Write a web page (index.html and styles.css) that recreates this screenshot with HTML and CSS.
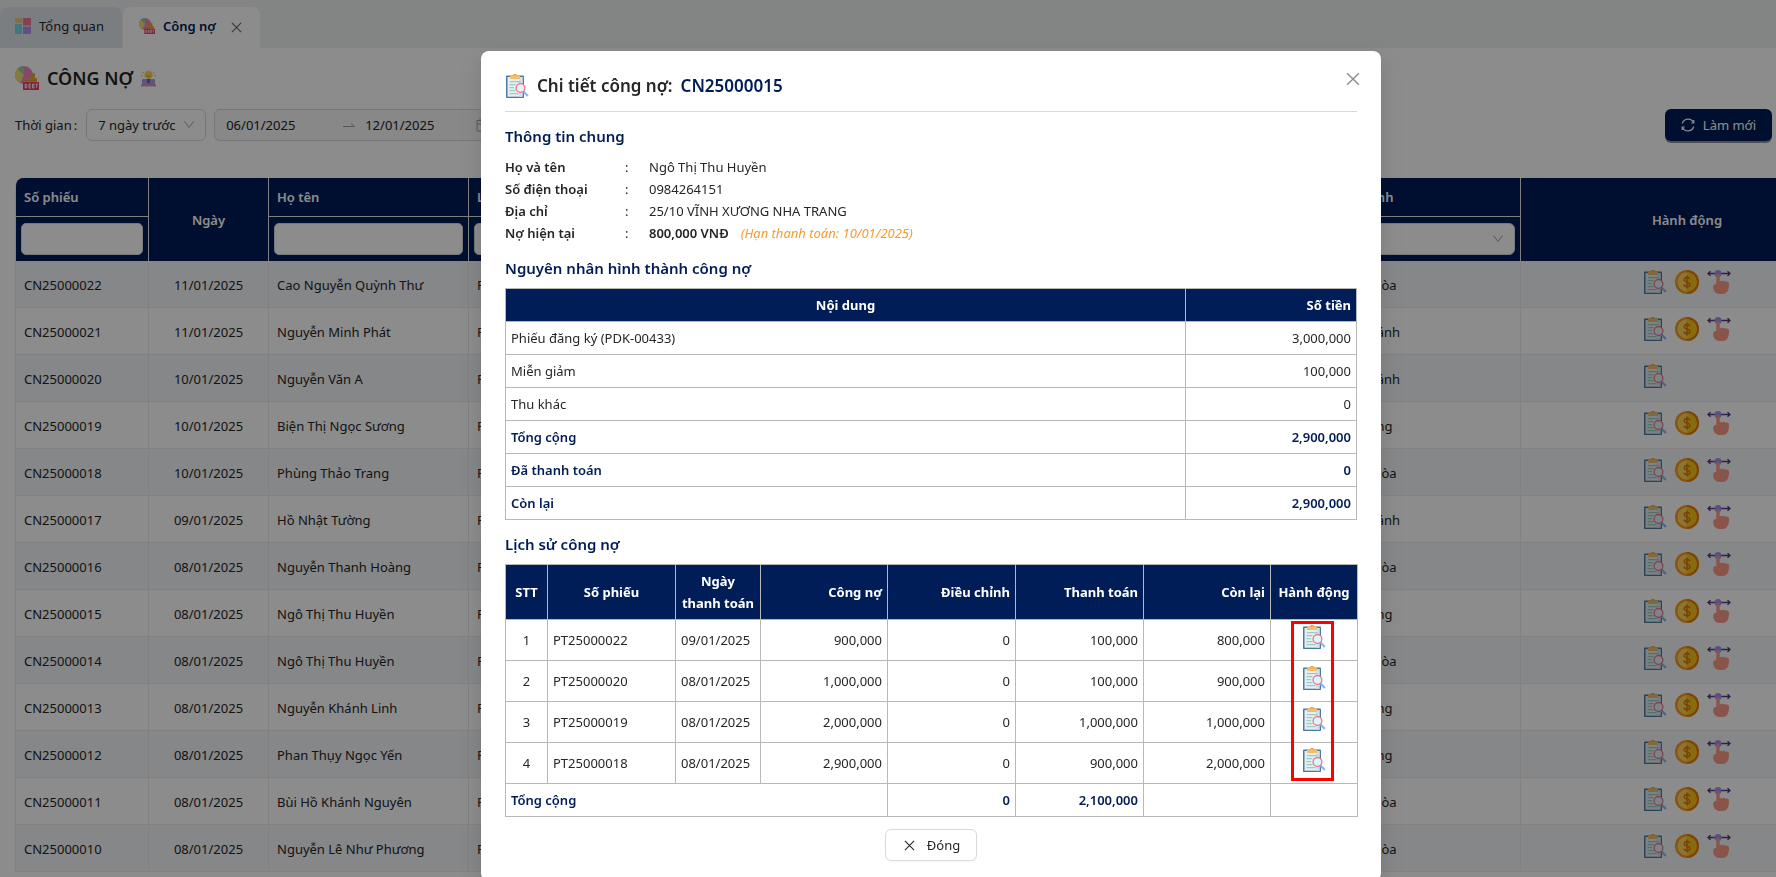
FILE: index.html
```html
<!DOCTYPE html>
<html lang="vi">
<head>
<meta charset="utf-8">
<title>Công nợ</title>
<link rel="stylesheet" href="styles.css">
</head>
<body>
<svg class="sprite" aria-hidden="true">
  <symbol id="i-detail" viewBox="0 0 24 24">
    <rect x="1" y="1.500" width="18" height="22.500" rx=".8" fill="#4d7a9e"/>
    <path d="M2.500 3h15v19.700h-15z" fill="#e6edf5"/>
    <path d="M14 3h3.500v19.700H14z" fill="#d3e0ec"/>
    <path d="M5 1.500h2.500Q8 0 10 0t2.500 1.500H15V5H5z" fill="#f0be6c"/>
    <path d="M7.500 1.500Q8 0 10 0t2.500 1.500z" fill="#e6a544"/>
    <path d="M5 7.700h10.500M4.500 10.700h6M4.500 13.700h4.500M4.500 16.700h6M4.500 19.700h9" stroke="#7cc4a6" stroke-width=".9" fill="none"/>
    <path d="M18.300 17.300l4.500 4.700" stroke="#86b6f4" stroke-width="2.200"/>
    <circle cx="15.500" cy="14" r="4.400" fill="#e0f3fa" stroke="#ea7080" stroke-width="1.200"/>
  </symbol>
  <symbol id="i-coin" viewBox="0 0 24 24">
    <circle cx="12" cy="12" r="12" fill="#f79a1c"/>
    <path d="M12 0a12 12 0 0 1 0 24z" fill="#e87d0a"/>
    <circle cx="12" cy="12" r="9.700" fill="#ffd65c"/>
    <path d="M12 2.300a9.700 9.700 0 0 1 0 19.400z" fill="#f9c41c"/>
    <path d="M14.800 9.300c-.3-1.200-1.400-1.800-2.800-1.800-1.600 0-2.700.8-2.700 2.200 0 3.100 5.600 1.700 5.600 4.700 0 1.400-1.200 2.300-2.900 2.300s-2.800-.8-3-2.100M12 5.500v13" fill="none" stroke="#dc780c" stroke-width="1.500"/>
  </symbol>
  <symbol id="i-swipe" viewBox="0 0 24 24">
    <path d="M1 3.500h22M3.500 1.200L1 3.500l2.500 2.300M20.500 1.200L23 3.500l-2.500 2.300" fill="none" stroke="#5d3a80" stroke-width="1.400"/>
    <circle cx="11" cy="3.500" r="3.500" fill="#9d94f2"/>
    <path d="M9.300 5.500c0-2 3.400-2 3.400 0v6c.8-1.200 2.300-1 2.900 0 .8-1 2.300-.8 2.800.3 1.300-.8 3.600-.1 3.600 1.900 0 5-.8 10.300-7 10.300h-2.500C8 24 6.200 20 6.200 17c0-2 1.400-3.300 3.100-3z" fill="#fa9a87"/>
  </symbol>
  <symbol id="i-debt" viewBox="0 0 24 24">
    <circle cx="9" cy="9" r="9" fill="#ee83c4"/>
    <path d="M9 9L2.600 2.600A9 9 0 0 0 5 17z" fill="#f5df72"/>
    <path d="M9 9L2.600 2.600A9 9 0 0 1 9 0z" fill="#8fd39b"/>
    <path d="M15.500 7H20v5h2v4H10v-3.500h5.500z" fill="#f0b43c"/>
    <path d="M15.500 9.200H20M15.500 11.500H20M10 14.200h12" stroke="#d08f1e" stroke-width=".8"/>
    <rect x="8" y="16" width="16" height="8" fill="#ea3f68"/>
    <path d="M10.200 18v4h1q1.600-2 0-4zM16 18h-2v4h2M14 20h2M17.500 18v4h1.500v-4zM20.500 18h2.500M21.700 18v4" fill="none" stroke="#fff" stroke-width=".9"/>
  </symbol>
  <symbol id="i-dash" viewBox="0 0 16 16">
    <path d="M0 0h7v5H0z" fill="#f3c57d"/><path d="M8 0h8v7.500H8z" fill="#f07790"/>
    <path d="M0 6h7v10H0z" fill="#79d6e6"/><path d="M8 8.500h8V16H8z" fill="#b394ea"/>
  </symbol>
  <symbol id="i-idea" viewBox="0 0 16 18">
    <path d="M1 2l2 1M15 2l-2 1M0 6h2M16 6h-2" stroke="#f5c069" stroke-width="1"/>
    <rect x="1" y="9.500" width="14" height="7" rx="1" fill="#a69be8"/>
    <path d="M0 15.500h16v2H0z" fill="#e58ca6"/>
    <circle cx="8" cy="5.200" r="4.400" fill="#f7d64c"/>
    <path d="M6.500 9.500h3V13L8 14.500 6.500 13z" fill="#6c6390"/><path d="M6.200 6q1.800 2 3.600 0" fill="none" stroke="#b98a1d" stroke-width=".8"/>
  </symbol>
  <symbol id="i-x" viewBox="0 0 12 12"><path d="M1 1l10 10M11 1L1 11" fill="none" stroke="currentColor" stroke-width="1.200"/></symbol>
  <symbol id="i-down" viewBox="0 0 12 12"><path d="M1.500 2.500L6 8.500l4.500-6" fill="none" stroke="currentColor" stroke-width="1"/></symbol>
</svg>

<div class="page">
  <nav class="tabs">
    <a class="tab" href="#tong-quan"><svg class="ico16"><use href="#i-dash"/></svg>Tổng quan</a>
    <a class="tab tab-on" href="#cong-no"><svg class="ico16"><use href="#i-debt"/></svg>Công nợ<svg class="tab-x"><use href="#i-x"/></svg></a>
  </nav>
  <main class="main">
    <h1 class="title"><svg class="ico24"><use href="#i-debt"/></svg>CÔNG NỢ<svg class="idea"><use href="#i-idea"/></svg></h1>
    <div class="toolbar">
      <label for="period">Thời gian<span class="colon">:</span></label>
      <div class="select-box period"><select id="period"><option>7 ngày trước</option></select><svg class="down"><use href="#i-down"/></svg></div>
      <div class="range">
        <input aria-label="Từ ngày" value="06/01/2025">
        <svg class="arrow" viewBox="0 0 12 12"><path d="M0 7.500h11.500L8 4.500" fill="none" stroke="currentColor"/></svg>
        <input aria-label="Đến ngày" value="12/01/2025">
        <svg class="cal" viewBox="0 0 14 14"><path d="M1 2.500h12v10.500H1zM1 6h12M4 .5v3M10 .5v3" fill="none" stroke="currentColor"/></svg>
      </div>
      <button class="refresh"><svg class="sync" viewBox="0 0 14 14"><path d="M1.300 5.500A6 6 0 0 1 12.500 4.500M12.700 8.500A6 6 0 0 1 1.500 9.500M12.800 2v3h-2.600M1.200 12V9h2.600" fill="none" stroke="currentColor" stroke-width="1.200"/></svg>Làm mới</button>
    </div>
    <div class="grid-wrap">
      <table class="grid">
        <colgroup><col class="g1"><col class="g2"><col class="g3"><col class="g4"><col class="g5"><col class="g6"></colgroup>
        <thead>
          <tr class="h1"><th>Số phiếu</th><th rowspan="2" class="c">Ngày</th><th>Họ tên</th><th>Loại phiếu</th><th>Chi nhánh</th><th rowspan="2" class="c">Hành động</th></tr>
          <tr class="h2"><th><input aria-label="Lọc số phiếu"></th><th><input aria-label="Lọc họ tên"></th><th><input aria-label="Lọc loại phiếu"></th><th><div class="select-box"><select aria-label="Lọc chi nhánh"><option></option></select><svg class="down"><use href="#i-down"/></svg></div></th></tr>
        </thead>
        <tbody>
          <tr><td>CN25000022</td><td>11/01/2025</td><td>Cao Nguyễn Quỳnh Thư</td><td>Phiếu đăng ký</td><td>Khánh Hòa</td><td><div class="acts"><svg><use href="#i-detail"/></svg><svg><use href="#i-coin"/></svg><svg><use href="#i-swipe"/></svg></div></td></tr>
          <tr><td>CN25000021</td><td>11/01/2025</td><td>Nguyễn Minh Phát</td><td>Phiếu đăng ký</td><td>Diên Khánh</td><td><div class="acts"><svg><use href="#i-detail"/></svg><svg><use href="#i-coin"/></svg><svg><use href="#i-swipe"/></svg></div></td></tr>
          <tr><td>CN25000020</td><td>10/01/2025</td><td>Nguyễn Văn A</td><td>Phiếu đăng ký</td><td>Diên Khánh</td><td><div class="acts"><svg><use href="#i-detail"/></svg></div></td></tr>
          <tr><td>CN25000019</td><td>10/01/2025</td><td>Biện Thị Ngọc Sương</td><td>Phiếu đăng ký</td><td>Nha Trang</td><td><div class="acts"><svg><use href="#i-detail"/></svg><svg><use href="#i-coin"/></svg><svg><use href="#i-swipe"/></svg></div></td></tr>
          <tr><td>CN25000018</td><td>10/01/2025</td><td>Phùng Thảo Trang</td><td>Phiếu đăng ký</td><td>Khánh Hòa</td><td><div class="acts"><svg><use href="#i-detail"/></svg><svg><use href="#i-coin"/></svg><svg><use href="#i-swipe"/></svg></div></td></tr>
          <tr><td>CN25000017</td><td>09/01/2025</td><td>Hồ Nhật Tường</td><td>Phiếu đăng ký</td><td>Diên Khánh</td><td><div class="acts"><svg><use href="#i-detail"/></svg><svg><use href="#i-coin"/></svg><svg><use href="#i-swipe"/></svg></div></td></tr>
          <tr><td>CN25000016</td><td>08/01/2025</td><td>Nguyễn Thanh Hoàng</td><td>Phiếu đăng ký</td><td>Khánh Hòa</td><td><div class="acts"><svg><use href="#i-detail"/></svg><svg><use href="#i-coin"/></svg><svg><use href="#i-swipe"/></svg></div></td></tr>
          <tr><td>CN25000015</td><td>08/01/2025</td><td>Ngô Thị Thu Huyền</td><td>Phiếu đăng ký</td><td>Nha Trang</td><td><div class="acts"><svg><use href="#i-detail"/></svg><svg><use href="#i-coin"/></svg><svg><use href="#i-swipe"/></svg></div></td></tr>
          <tr><td>CN25000014</td><td>08/01/2025</td><td>Ngô Thị Thu Huyền</td><td>Phiếu đăng ký</td><td>Khánh Hòa</td><td><div class="acts"><svg><use href="#i-detail"/></svg><svg><use href="#i-coin"/></svg><svg><use href="#i-swipe"/></svg></div></td></tr>
          <tr><td>CN25000013</td><td>08/01/2025</td><td>Nguyễn Khánh Linh</td><td>Phiếu đăng ký</td><td>Nha Trang</td><td><div class="acts"><svg><use href="#i-detail"/></svg><svg><use href="#i-coin"/></svg><svg><use href="#i-swipe"/></svg></div></td></tr>
          <tr><td>CN25000012</td><td>08/01/2025</td><td>Phan Thụy Ngọc Yến</td><td>Phiếu đăng ký</td><td>Nha Trang</td><td><div class="acts"><svg><use href="#i-detail"/></svg><svg><use href="#i-coin"/></svg><svg><use href="#i-swipe"/></svg></div></td></tr>
          <tr><td>CN25000011</td><td>08/01/2025</td><td>Bùi Hồ Khánh Nguyên</td><td>Phiếu đăng ký</td><td>Khánh Hòa</td><td><div class="acts"><svg><use href="#i-detail"/></svg><svg><use href="#i-coin"/></svg><svg><use href="#i-swipe"/></svg></div></td></tr>
          <tr><td>CN25000010</td><td>08/01/2025</td><td>Nguyễn Lê Như Phương</td><td>Phiếu đăng ký</td><td>Khánh Hòa</td><td><div class="acts"><svg><use href="#i-detail"/></svg><svg><use href="#i-coin"/></svg><svg><use href="#i-swipe"/></svg></div></td></tr>
        </tbody>
      </table>
    </div>
  </main>
</div>

<div class="mask">
  <section class="modal" role="dialog" aria-labelledby="dlg-title">
    <header class="modal-head">
      <h2 id="dlg-title"><svg class="ico24"><use href="#i-detail"/></svg>Chi tiết công nợ: <span class="code">CN25000015</span></h2>
      <button class="modal-x" aria-label="Đóng cửa sổ"><svg><use href="#i-x"/></svg></button>
    </header>
    <h3>Thông tin chung</h3>
    <dl class="info">
      <dt>Họ và tên</dt><dd>Ngô Thị Thu Huyền</dd>
      <dt>Số điện thoại</dt><dd>0984264151</dd>
      <dt>Địa chỉ</dt><dd>25/10 VĨNH XƯƠNG NHA TRANG</dd>
      <dt>Nợ hiện tại</dt><dd><b>800,000 VNĐ</b><em>(Hạn thanh toán: 10/01/2025)</em></dd>
    </dl>
    <h3>Nguyên nhân hình thành công nợ</h3>
    <table class="box reasons">
      <colgroup><col><col class="r2"></colgroup>
      <thead><tr><th>Nội dung</th><th class="r">Số tiền</th></tr></thead>
      <tbody>
        <tr><td>Phiếu đăng ký (PDK-00433)</td><td class="r">3,000,000</td></tr>
        <tr><td>Miễn giảm</td><td class="r">100,000</td></tr>
        <tr><td>Thu khác</td><td class="r">0</td></tr>
        <tr class="sum"><td>Tổng cộng</td><td class="r">2,900,000</td></tr>
        <tr class="sum"><td>Đã thanh toán</td><td class="r">0</td></tr>
        <tr class="sum"><td>Còn lại</td><td class="r">2,900,000</td></tr>
      </tbody>
    </table>
    <h3>Lịch sử công nợ</h3>
    <div class="history">
      <table class="box">
        <colgroup><col class="k1"><col class="k2"><col class="k3"><col class="k4"><col class="k5"><col class="k6"><col class="k7"><col class="k8"></colgroup>
        <thead><tr><th>STT</th><th>Số phiếu</th><th>Ngày<br>thanh toán</th><th class="r">Công nợ</th><th class="r">Điều chỉnh</th><th class="r">Thanh toán</th><th class="r">Còn lại</th><th>Hành động</th></tr></thead>
        <tbody class="tall">
          <tr><td class="c">1</td><td>PT25000022</td><td>09/01/2025</td><td class="r">900,000</td><td class="r">0</td><td class="r">100,000</td><td class="r">800,000</td><td><svg class="view"><use href="#i-detail"/></svg></td></tr>
          <tr><td class="c">2</td><td>PT25000020</td><td>08/01/2025</td><td class="r">1,000,000</td><td class="r">0</td><td class="r">100,000</td><td class="r">900,000</td><td><svg class="view"><use href="#i-detail"/></svg></td></tr>
          <tr><td class="c">3</td><td>PT25000019</td><td>08/01/2025</td><td class="r">2,000,000</td><td class="r">0</td><td class="r">1,000,000</td><td class="r">1,000,000</td><td><svg class="view"><use href="#i-detail"/></svg></td></tr>
          <tr><td class="c">4</td><td>PT25000018</td><td>08/01/2025</td><td class="r">2,900,000</td><td class="r">0</td><td class="r">900,000</td><td class="r">2,000,000</td><td><svg class="view"><use href="#i-detail"/></svg></td></tr>
        </tbody>
        <tfoot><tr class="sum"><td colspan="4">Tổng cộng</td><td class="r">0</td><td class="r">2,100,000</td><td></td><td></td></tr></tfoot>
      </table>
      <div class="highlight"></div>
    </div>
    <footer class="modal-foot"><button class="close"><svg><use href="#i-x"/></svg>Đóng</button></footer>
  </section>
</div>
</body>
</html>
```
FILE: styles.css
```css
:root { --navy: #001d57; --line: #b8b8b8; --text: #262626; }
* { box-sizing: border-box; }
html { height: 100%; overflow: hidden; }
body { margin: 0; height: 100%; overflow: hidden; font: 13px/22px "Noto Sans", "Open Sans", sans-serif; color: var(--text); background: #fff; }
h1, h2, h3, dl, dd { margin: 0; }
svg { flex: none; }
input, select, button { font: inherit; color: inherit; }
.sprite { display: none; }
.ico16 { width: 16px; height: 16px; }
.ico24 { width: 24px; height: 24px; }
.c { text-align: center; }
.r { text-align: right; }

/* Tabs */
.tabs { display: flex; gap: 1px; height: 48px; padding-top: 7px; background: #eff3f0; }
.tab { display: flex; align-items: center; gap: 8px; padding: 0 18px 3px 15px; border-radius: 8px 8px 0 0; background: #e1e6ec; color: inherit; text-decoration: none; }
.tab-on { padding-left: 16px; background: #fff; color: var(--navy); font-weight: 600; }
.tab-x { width: 11px; height: 11px; margin: 2px 0 0 7px; color: #666; }

/* Page */
.main { padding-left: 15px; }
.title { display: flex; align-items: center; gap: 8px; height: 46px; padding-top: 14px; font-size: 18px; line-height: 28px; font-weight: 600; }
.idea { width: 15px; height: 17px; }
.toolbar { display: flex; align-items: center; gap: 8px; height: 32px; margin: 15px 4px 0 0; }
.colon { margin: 0 1px 0 2px; }
.select-box { position: relative; height: 32px; background: #fff; border: 1px solid #d9d9d9; border-radius: 6px; }
.select-box select { width: 100%; height: 100%; padding: 0 11px; border: 0; background: transparent; appearance: none; outline: 0; }
.down { position: absolute; right: 10px; top: 9px; width: 12px; height: 12px; color: #a0a0a0; pointer-events: none; }
.period { width: 120px; }
.range { display: flex; align-items: center; width: 290px; height: 32px; padding: 0 11px; background: #f7f7f7; border: 1px solid #d9d9d9; border-radius: 6px; color: #222; }
.range input { width: 117px; padding: 0; border: 0; background: transparent; outline: 0; }
.arrow { width: 12px; height: 12px; margin-right: 10px; color: #a0a0a0; }
.cal { width: 14px; height: 14px; margin-left: -6px; color: #a0a0a0; }
.refresh { display: flex; align-items: center; gap: 8px; height: 32px; margin-left: auto; padding: 0 16px; border: 0; border-radius: 6px; background: var(--navy); color: #fff; box-shadow: 0 2px 0 #8a8f98; }
.sync { width: 14px; height: 14px; }

.grid-wrap { margin-top: 37px; overflow: hidden; border-left: 1px solid #ebebeb; border-radius: 8px 0 0 0; }
.grid { width: 1838px; table-layout: fixed; border-collapse: separate; border-spacing: 0; }
.g1 { width: 133px; } .g2 { width: 120px; } .g3 { width: 200px; } .g4 { width: 852px; } .g5 { width: 200px; } .g6 { width: 333px; }
.grid th { padding: 0 8px; background: var(--navy); color: #fff; font-weight: 600; text-align: left; border-right: 1px solid #e8e8e8; }
.grid th.c { text-align: center; }
.h1 th { height: 39px; border-bottom: 1px solid #e8e8e8; }
.h1 th.c { border-bottom: 0; }
.grid .h2 th { height: 44px; padding: 0 5px; }
.h2 input { display: block; width: 100%; height: 32px; border: 1px solid #d9d9d9; border-radius: 5px; background: #fff; outline: 0; }
.grid td { height: 47px; padding: 2px 8px 0; border-right: 1px solid #ebebeb; border-bottom: 1px solid #ebebeb; }
.grid tbody tr:nth-child(odd) { background: #f3f6f9; }
.grid td:nth-child(2) { text-align: center; }
.acts { display: grid; grid-template-columns: repeat(3, 24px); gap: 8px; justify-content: center; padding-bottom: 6px; }
.acts svg { width: 24px; height: 24px; }

/* Dialog */
.mask { position: fixed; inset: 0; overflow: hidden; padding: 51px 0 0 86px; background: rgba(0, 0, 0, .45); }
.modal { width: 900px; max-width: 100%; margin: 0 auto; padding: 20px 24px; background: #fff; border-radius: 8px; box-shadow: 0 6px 16px rgba(0,0,0,.08), 0 3px 6px -4px rgba(0,0,0,.12), 0 9px 28px 8px rgba(0,0,0,.05); }
.modal-head { position: relative; height: 41px; border-bottom: 1px solid #d9d9d9; }
.modal h2 { display: flex; align-items: center; gap: 8px; font-size: 17px; line-height: 30px; font-weight: 600; }
.code { color: var(--navy); }
.modal-x { position: absolute; right: -4px; top: 0; width: 16px; height: 16px; padding: 1px; border: 0; background: none; color: #8c8c8c; }
.modal-x svg { display: block; width: 14px; height: 14px; }
.modal h3 { padding: 12px 0 8px; font-size: 15px; line-height: 24px; font-weight: 600; color: var(--navy); }
.info { display: grid; grid-template-columns: 120px 1fr; }
.info dt { font-weight: 600; }
.info dd::before { content: ":"; display: inline-block; width: 24px; }
.info b { font-weight: 600; }
.info em { margin-left: 12px; color: #f79b2e; }
.box { width: 100%; table-layout: fixed; border-collapse: collapse; }
.box th, .box td { padding: 5px; border: 1px solid var(--line); }
.box th { background: var(--navy); color: #fff; font-weight: 700; }
.box th.r { text-align: right; }
.r2 { width: 171px; }
.sum td { font-weight: 600; color: var(--navy); }
.k1 { width: 42px; } .k2 { width: 128px; } .k3 { width: 85px; } .k4 { width: 127px; } .k5 { width: 128px; } .k6 { width: 128px; } .k7 { width: 127px; } .k8 { width: 87px; }
.history { position: relative; }
.history th { padding: 5px 0; }
.history th.r { padding-right: 5px; }
.tall td { height: 41px; }
.box .view { display: block; width: 24px; height: 24px; margin: -6px auto 0; }
.highlight { position: absolute; top: 57px; right: 23px; width: 43px; height: 160px; border: 3px solid #f00; pointer-events: none; }
.modal-foot { display: flex; justify-content: center; padding-top: 12px; }
.close { display: flex; align-items: center; gap: 12px; height: 32px; padding: 0 16px 0 18px; border: 1px solid #d9d9d9; border-radius: 6px; background: #fff; box-shadow: 0 2px 0 rgba(0,0,0,.02); }
.close svg { width: 11px; height: 11px; }
```
